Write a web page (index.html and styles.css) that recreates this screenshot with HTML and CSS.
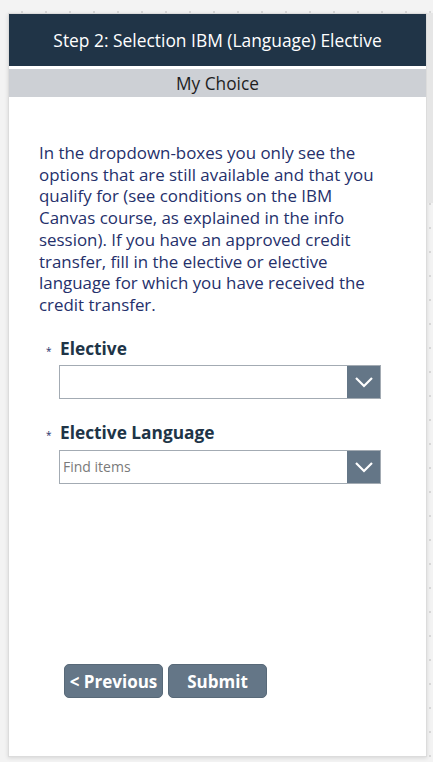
FILE: index.html
```html
<!DOCTYPE html>
<html lang="en">
  <head>
    <meta charset="UTF-8" />
    <meta name="viewport" content="width=device-width, initial-scale=1.0" />
    <title>Step 2: Selection IBM (Language) Elective</title>
    <link rel="stylesheet" href="styles.css">
  </head>
  <body>
    <div class="canvas">
      <div class="screen">
        <div class="screen-header">Step 2: Selection IBM (Language) Elective</div>
        <div class="sub-header">My Choice</div>

        <div class="screen-body">
          <p class="intro">
            In the dropdown-boxes you only see the options that are still
            available and that you qualify for (see conditions on the IBM
            Canvas course, as explained in the info session). If you have an
            approved credit transfer, fill in the elective or elective
            language for which you have received the credit transfer.
          </p>

          <div class="field">
            <div class="field-label"><span class="required">*</span>Elective</div>
            <div class="combo">
              <input type="text" class="combo-input" />
              <button type="button" class="combo-button">
                <svg width="20" height="12" viewBox="0 0 20 12">
                  <path d="M2 2 L10 10 L18 2" fill="none" stroke="#ffffff" stroke-width="2.2" />
                </svg>
              </button>
            </div>
          </div>

          <div class="field">
            <div class="field-label"><span class="required">*</span>Elective Language</div>
            <div class="combo">
              <input type="text" class="combo-input" placeholder="Find items" />
              <button type="button" class="combo-button">
                <svg width="20" height="12" viewBox="0 0 20 12">
                  <path d="M2 2 L10 10 L18 2" fill="none" stroke="#ffffff" stroke-width="2.2" />
                </svg>
              </button>
            </div>
          </div>
        </div>

        <div class="nav-buttons">
          <button type="button" class="nav-button">&lt; Previous</button>
          <button type="button" class="nav-button">Submit</button>
        </div>
      </div>
      <div class="scroll-strip"></div>
    </div>
  </body>
</html>
```

FILE: styles.css
```css
body,
html {
  margin: 0;
  padding: 0;
  font-family: "Open Sans", "Noto Sans", sans-serif;
  background-color: #f3f3f3;
  color: #25306b;
  height: 100%;
  overflow: hidden;
}

.canvas {
  display: flex;
  height: 762px;
  padding: 13px 0 0 8px;
  box-sizing: border-box;
  background-color: #f3f3f3;
  background-image: radial-gradient(#d9d9d9 1px, transparent 1.2px);
  background-size: 24px 24px;
  background-position: 10px 0;
}

.screen {
  width: 419px;
  height: 744px;
  background-color: #ffffff;
  border: 1px solid #dcdcdc;
  box-sizing: border-box;
  box-shadow: 0 1px 4px rgba(0, 0, 0, 0.12);
  display: flex;
  flex-direction: column;
}

.screen-header {
  height: 52px;
  background-color: #203447;
  color: #ffffff;
  font-size: 17.4px;
  display: flex;
  align-items: center;
  justify-content: center;
  border-bottom: 3px solid #ffffff;
}

.sub-header {
  height: 28px;
  background-color: #cdd0d5;
  color: #1e1e1e;
  font-size: 17.3px;
  display: flex;
  align-items: center;
  justify-content: center;
}

.screen-body {
  padding: 45px 36px 0 30px;
  flex-grow: 1;
}

.intro {
  margin: 0 0 21px 0;
  font-size: 16.9px;
  line-height: 21.7px;
}

.field {
  margin-bottom: 22px;
}

.field-label {
  display: flex;
  align-items: baseline;
  font-size: 17.3px;
  font-weight: 700;
  color: #203447;
  margin-bottom: 5px;
}

.field + .field .field-label {
  margin-bottom: 6px;
}

.required {
  width: 21px;
  padding-left: 7px;
  box-sizing: border-box;
  font-size: 10px;
  font-weight: 400;
  color: #25306b;
}

.combo {
  display: flex;
  margin-left: 20px;
  width: 322px;
  height: 34px;
  border: 1px solid #a3abb3;
  box-sizing: border-box;
}

.combo-input {
  flex-grow: 1;
  border: none;
  padding: 0 3px;
  font-family: "Open Sans", sans-serif;
  font-size: 14px;
  color: #333333;
  min-width: 0;
}

.combo-input::placeholder {
  color: #7a7a7a;
}

.combo-input:focus {
  outline: none;
}

.combo-button {
  width: 33px;
  border: none;
  background-color: #647687;
  display: flex;
  align-items: center;
  justify-content: center;
  padding: 0;
}

.nav-buttons {
  display: flex;
  gap: 5px;
  padding: 0 0 58px 55px;
}

.nav-button {
  width: 99px;
  height: 34px;
  background-color: #647687;
  border: 1px solid #586978;
  border-radius: 5px;
  color: #ffffff;
  font-family: "Open Sans", sans-serif;
  font-size: 17px;
  font-weight: 700;
  padding: 0;
  cursor: pointer;
}

.scroll-strip {
  width: 6px;
  height: 190px;
  margin-top: 0;
  background-color: #e6e6e6;
}
```
